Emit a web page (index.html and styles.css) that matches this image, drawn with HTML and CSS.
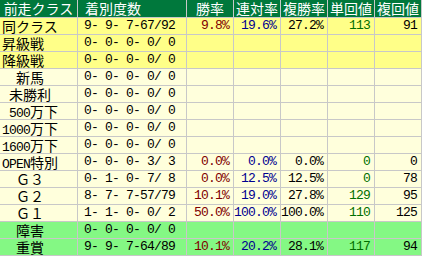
FILE: index.html
```html
<!DOCTYPE html>
<html lang="ja">
<head>
<meta charset="utf-8">
<title>前走クラス</title>
<link rel="stylesheet" href="styles.css">
</head>
<body>
<div class="stats" role="table">
  <div class="row head" role="row">
    <span class="label-h">前走クラス</span>
    <span class="rec-h">着別度数</span>
    <span>勝率</span>
    <span>連対率</span>
    <span>複勝率</span>
    <span>単回値</span>
    <span>複回値</span>
  </div>
  <div class="row yellow" role="row">
    <span class="label">同クラス</span><span class="rec">9- 9- 7-67/92</span>
    <span class="num win">9.8%</span><span class="num ren">19.6%</span><span class="num fuku">27.2%</span><span class="num tan">113</span><span class="num fk">91</span>
  </div>
  <div class="row yellow" role="row">
    <span class="label">昇級戦</span><span class="rec">0- 0- 0- 0/ 0</span>
    <span></span><span></span><span></span><span></span><span></span>
  </div>
  <div class="row yellow" role="row">
    <span class="label">降級戦</span><span class="rec">0- 0- 0- 0/ 0</span>
    <span></span><span></span><span></span><span></span><span></span>
  </div>
  <div class="row cream" role="row">
    <span class="label ind2">新馬</span><span class="rec">0- 0- 0- 0/ 0</span>
    <span></span><span></span><span></span><span></span><span></span>
  </div>
  <div class="row cream" role="row">
    <span class="label ind1">未勝利</span><span class="rec">0- 0- 0- 0/ 0</span>
    <span></span><span></span><span></span><span></span><span></span>
  </div>
  <div class="row cream" role="row">
    <span class="label ind1"><b class="asc">500</b>万下</span><span class="rec">0- 0- 0- 0/ 0</span>
    <span></span><span></span><span></span><span></span><span></span>
  </div>
  <div class="row cream" role="row">
    <span class="label"><b class="asc">1000</b>万下</span><span class="rec">0- 0- 0- 0/ 0</span>
    <span></span><span></span><span></span><span></span><span></span>
  </div>
  <div class="row cream" role="row">
    <span class="label"><b class="asc">1600</b>万下</span><span class="rec">0- 0- 0- 0/ 0</span>
    <span></span><span></span><span></span><span></span><span></span>
  </div>
  <div class="row cream" role="row">
    <span class="label"><b class="asc">OPEN</b>特別</span><span class="rec">0- 0- 0- 3/ 3</span>
    <span class="num win">0.0%</span><span class="num ren">0.0%</span><span class="num fuku">0.0%</span><span class="num tan">0</span><span class="num fk">0</span>
  </div>
  <div class="row cream" role="row">
    <span class="label ind2">Ｇ３</span><span class="rec">0- 1- 0- 7/ 8</span>
    <span class="num win">0.0%</span><span class="num ren">12.5%</span><span class="num fuku">12.5%</span><span class="num tan">0</span><span class="num fk">78</span>
  </div>
  <div class="row cream" role="row">
    <span class="label ind2">Ｇ２</span><span class="rec">8- 7- 7-57/79</span>
    <span class="num win">10.1%</span><span class="num ren">19.0%</span><span class="num fuku">27.8%</span><span class="num tan">129</span><span class="num fk">95</span>
  </div>
  <div class="row cream" role="row">
    <span class="label ind2">Ｇ１</span><span class="rec">1- 1- 0- 0/ 2</span>
    <span class="num win">50.0%</span><span class="num ren">100.0%</span><span class="num fuku">100.0%</span><span class="num tan">110</span><span class="num fk">125</span>
  </div>
  <div class="row green" role="row">
    <span class="label ind2">障害</span><span class="rec">0- 0- 0- 0/ 0</span>
    <span></span><span></span><span></span><span></span><span></span>
  </div>
  <div class="row green" role="row">
    <span class="label ind2">重賞</span><span class="rec">9- 9- 7-64/89</span>
    <span class="num win">10.1%</span><span class="num ren">20.2%</span><span class="num fuku">28.1%</span><span class="num tan">117</span><span class="num fk">94</span>
  </div>
</div>
</body>
</html>
```

FILE: styles.css
```css
html, body {
  margin: 0;
  padding: 0;
  background: #ffffff;
}

.stats {
  display: grid;
  grid-template-columns: 77px 108px repeat(5, 46px);
  grid-template-rows: 17px repeat(14, 16px);
  gap: 1px;
  padding: 0 1px 1px 0;
  width: 422px;
  box-sizing: border-box;
  background: #c8c8c8;
  font-family: "Noto Sans CJK JP", sans-serif;
  font-size: 14px;
  line-height: 16px;
  color: #000000;
}

.row {
  display: contents;
}

.row > span {
  display: block;
  white-space: pre;
}

.head > span {
  background: #00783c;
  color: #ffffff;
  text-align: center;
  line-height: 17px;
}

.head > .rec-h {
  text-align: left;
  padding-left: 7px;
}

.yellow > span { background: #ffff88; }
.cream > span { background: #ffffdc; }
.green > span { background: #84f884; }

.label { padding-left: 2px; text-align: left; }
.label.ind1 { padding-left: 9px; }
.label.ind2 { padding-left: 16px; }

.asc {
  font-weight: normal;
  font-family: "Liberation Mono", monospace;
  font-size: 13px;
  letter-spacing: -0.8px;
}

.rec,
.num {
  font-family: "Liberation Mono", monospace;
  font-size: 13px;
  letter-spacing: -0.8px;
}

.rec { padding-left: 6px; text-align: left; }
.num { text-align: right; padding-right: 4px; }

.win { color: #800000; }
.ren { color: #000090; }
.fuku { color: #000000; }
.tan { color: #007000; }
.fk { color: #000000; }
```
